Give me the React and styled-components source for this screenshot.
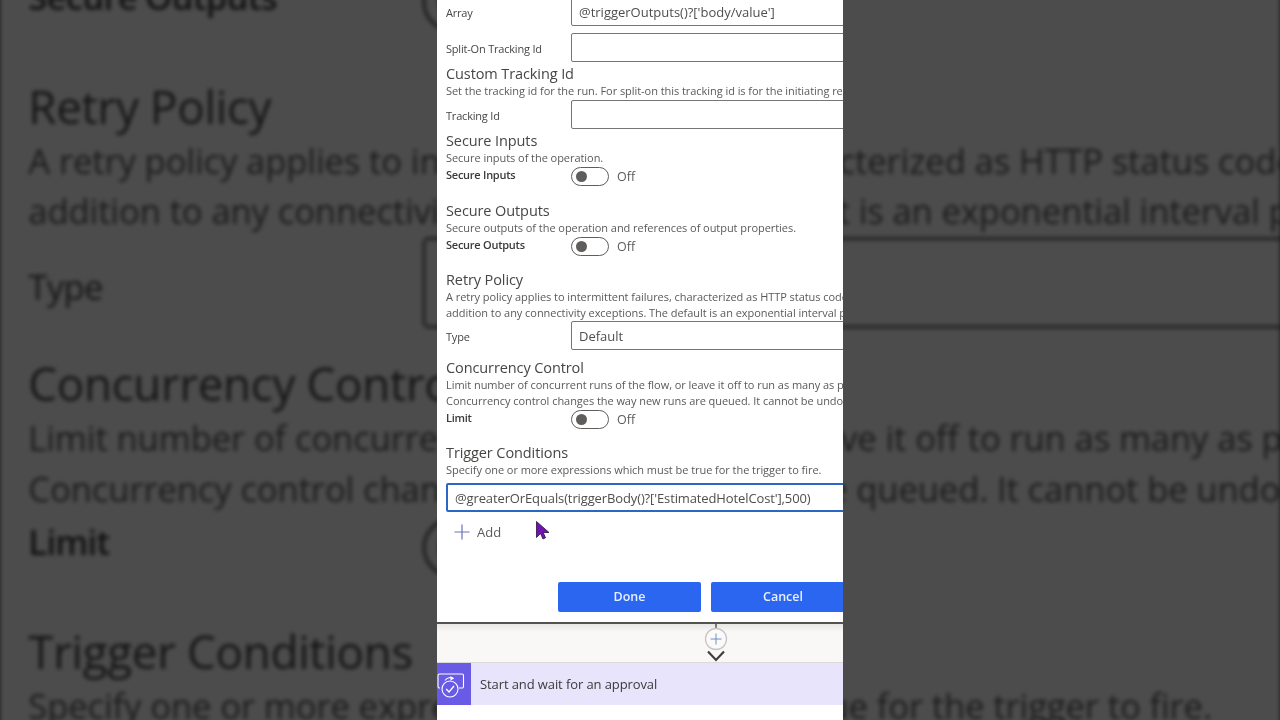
import React from 'react';
import styled, { createGlobalStyle } from 'styled-components';

const GlobalStyle = createGlobalStyle`
  html, body {
    margin: 0;
    padding: 0;
    background: #4d4d4d;
    font-family: "Open Sans", "Noto Sans", "Liberation Sans", sans-serif;
  }
`;

const Stage = styled.div`
  position: relative;
  width: 1280px;
  height: 720px;
  overflow: hidden;
  display: flex;
  justify-content: center;
`;

// the same frame, zoomed up and dimmed, fills the sides of the video
const Backdrop = styled.div`
  position: absolute;
  inset: 0;
  display: flex;
  justify-content: center;
  &::after {
    content: '';
    position: absolute;
    inset: 0;
    background: rgba(0, 0, 0, 0.7);
  }
`;

const Zoomed = styled.div`
  flex: none;
  transform: scale(3.153);
  transform-origin: center center;
  filter: blur(0.7px);
`;

const Foreground = styled.div`
  position: relative;
  flex: none;
  filter: blur(0.3px);
`;

const Sheet = styled.div`
  width: 406px;
  height: 720px;
  background: #fff;
  overflow: hidden;
  display: flex;
  flex-direction: column;
  color: #323130;
`;

const Form = styled.div`
  height: 625px;
  flex: none;
  padding-left: 9px;
  margin-top: -3px;
  display: flex;
  flex-direction: column;
`;

const FieldRow = styled.div`
  display: flex;
  align-items: flex-start;
  margin-top: ${(p) => p.$top || 0}px;
`;

const FieldLabel = styled.div`
  width: 125px;
  flex: none;
  font-size: 11px;
  line-height: 16px;
  padding-top: 8px;
  color: #484644;
  letter-spacing: -0.2px;
`;

const TextBox = styled.div`
  width: 300px;
  height: 29px;
  flex: none;
  box-sizing: border-box;
  border: 1px solid #77757a;
  border-radius: 2px;
  padding: 1px 7px 0;
  font-size: 13px;
  line-height: 26px;
  color: #504e4c;
  white-space: nowrap;
`;

const Heading = styled.div`
  font-size: 14.5px;
  line-height: 19px;
  height: 19px;
  margin-top: ${(p) => p.$top || 0}px;
  color: #484644;
  white-space: nowrap;
  letter-spacing: -0.1px;
`;

const Description = styled.div`
  font-size: 11px;
  line-height: 16px;
  height: 16px;
  color: #5c5a58;
  white-space: nowrap;
  letter-spacing: -0.05px;
`;

const ToggleRow = styled.div`
  display: flex;
  align-items: center;
  height: 19px;
  margin-top: 1px;
`;

const ToggleLabel = styled.div`
  width: 125px;
  flex: none;
  font-size: 11px;
  font-weight: 600;
  line-height: 16px;
  margin-top: -3px;
  color: #3b3a39;
  letter-spacing: -0.25px;
`;

const ToggleTrack = styled.div`
  width: 38px;
  height: 19px;
  flex: none;
  box-sizing: border-box;
  border: 1px solid #605e5c;
  border-radius: 10px;
  padding: 3px 4px;
`;

const ToggleThumb = styled.div`
  width: 11px;
  height: 11px;
  border-radius: 50%;
  background: #605e5c;
`;

const ToggleText = styled.div`
  margin-left: 8px;
  font-size: 12.5px;
  color: #5c5a58;
`;

const ConditionBox = styled.div`
  width: 420px;
  height: 29px;
  flex: none;
  margin-top: 5px;
  box-sizing: border-box;
  border: 2px solid #2c67c4;
  border-radius: 2px;
  padding: 0 7px;
  font-size: 13px;
  line-height: 26px;
  color: #504e4c;
  white-space: nowrap;
  letter-spacing: -0.12px;
`;

const AddRow = styled.div`
  display: flex;
  align-items: center;
  height: 30px;
  margin-top: 5px;
  padding-left: 8px;
  gap: 7px;
  font-size: 13px;
  color: #5c5a58;
`;

const Actions = styled.div`
  display: flex;
  gap: 10px;
  margin-top: 35px;
  padding-left: 112px;
`;

const ActionButton = styled.div`
  width: ${(p) => p.$width}px;
  height: 30px;
  flex: none;
  background: #2b66f0;
  border-radius: 2px;
  color: #e8f0ff;
  font-size: 12.5px;
  font-weight: 600;
  line-height: 30px;
  text-align: center;
`;

const Gutter = styled.div`
  height: 40px;
  flex: none;
  box-sizing: border-box;
  border-top: 2px solid #55534f;
  background: linear-gradient(#e8e7e5, #f9f8f7 8px, #f9f8f7);
  padding-left: 264px;
`;

const StepCard = styled.div`
  height: 43px;
  flex: none;
  display: flex;
  align-items: center;
  background: #e7e4fb;
  border-top: 1px solid #dcdad8;
  box-sizing: border-box;
`;

const StepIcon = styled.div`
  width: 34px;
  height: 100%;
  flex: none;
  background: #6a5be6;
`;

const StepTitle = styled.div`
  margin-left: 9px;
  font-size: 13px;
  color: #3b3a39;
  letter-spacing: -0.1px;
`;

const Cursor = styled.svg`
  position: absolute;
  left: 99px;
  top: 520px;
`;

const Toggle = ({ label }) => (
  <ToggleRow>
    <ToggleLabel>{label}</ToggleLabel>
    <ToggleTrack>
      <ToggleThumb />
    </ToggleTrack>
    <ToggleText>Off</ToggleText>
  </ToggleRow>
);

const PlusIcon = () => (
  <svg width="16" height="16" viewBox="0 0 16 16" fill="none" stroke="#6b74b8" strokeWidth="1.2">
    <path d="M8 0.5V15.5M0.5 8H15.5" />
  </svg>
);

const Connector = () => (
  <svg width="30" height="38" viewBox="0 0 30 38" fill="none" style={{ display: 'block' }}>
    <path d="M15 0V5" stroke="#55534f" strokeWidth="1.5" />
    <circle cx="15" cy="15" r="10.5" fill="#fbfaf9" stroke="#c8c6c4" strokeWidth="1.3" />
    <path d="M15 9.5V20.5M9.5 15H20.5" stroke="#6f8fc8" strokeWidth="1" />
    <path d="M7 27.5L15 36L23 27.5" stroke="#3f3e3c" strokeWidth="2.2" />
  </svg>
);

const ApprovalIcon = () => (
  <svg width="34" height="42" viewBox="0 0 34 42" fill="none" stroke="#fff" strokeWidth="1.1">
    <path d="M3 25H2.5A1.5 1.5 0 0 1 1 23.5V12.5A1.5 1.5 0 0 1 2.5 11H25A1.5 1.5 0 0 1 26.5 12.5V23.5A1.5 1.5 0 0 1 25 25H22" />
    <circle cx="13" cy="26" r="8" fill="#6a5be6" />
    <path d="M9.2 26L12 29L17 23" strokeWidth="1.3" />
    <path d="M8 17.5C10 14.5 14 14 16.5 15.5" />
    <path d="M13.5 13L17 15.5L13.5 17.5Z" fill="#fff" stroke="none" />
  </svg>
);

const Frame = () => (
  <Sheet>
    <Form>
      <FieldRow>
        <FieldLabel>Array</FieldLabel>
        <TextBox>@triggerOutputs()?['body/value']</TextBox>
      </FieldRow>
      <FieldRow $top={7}>
        <FieldLabel>Split-On Tracking Id</FieldLabel>
        <TextBox />
      </FieldRow>

      <Heading $top={2}>Custom Tracking Id</Heading>
      <Description>Set the tracking id for the run. For split-on this tracking id is for the initiating request.</Description>
      <FieldRow $top={1}>
        <FieldLabel>Tracking Id</FieldLabel>
        <TextBox />
      </FieldRow>

      <Heading $top={2}>Secure Inputs</Heading>
      <Description>Secure inputs of the operation.</Description>
      <Toggle label="Secure Inputs" />

      <Heading $top={15}>Secure Outputs</Heading>
      <Description>Secure outputs of the operation and references of output properties.</Description>
      <Toggle label="Secure Outputs" />

      <Heading $top={14}>Retry Policy</Heading>
      <Description>A retry policy applies to intermittent failures, characterized as HTTP status codes 408, 429, and 5xx, in</Description>
      <Description>addition to any connectivity exceptions. The default is an exponential interval policy set to retry 4 times.</Description>
      <FieldRow>
        <FieldLabel>Type</FieldLabel>
        <TextBox>Default</TextBox>
      </FieldRow>

      <Heading $top={8}>Concurrency Control</Heading>
      <Description>Limit number of concurrent runs of the flow, or leave it off to run as many as possible.</Description>
      <Description>Concurrency control changes the way new runs are queued. It cannot be undone once enabled.</Description>
      <Toggle label="Limit" />

      <Heading $top={14}>Trigger Conditions</Heading>
      <Description>Specify one or more expressions which must be true for the trigger to fire.</Description>
      <ConditionBox>@greaterOrEquals(triggerBody()?['EstimatedHotelCost'],500)</ConditionBox>
      <AddRow>
        <PlusIcon />
        <span>Add</span>
      </AddRow>

      <Actions>
        <ActionButton $width={143}>Done</ActionButton>
        <ActionButton $width={144}>Cancel</ActionButton>
      </Actions>
    </Form>

    <Gutter>
      <Connector />
    </Gutter>

    <StepCard>
      <StepIcon>
        <ApprovalIcon />
      </StepIcon>
      <StepTitle>Start and wait for an approval</StepTitle>
    </StepCard>
  </Sheet>
);

export default function App() {
  return (
    <>
      <GlobalStyle />
      <Stage>
        <Backdrop aria-hidden="true">
          <Zoomed>
            <Frame />
          </Zoomed>
        </Backdrop>
        <Foreground>
          <Frame />
          <Cursor width="16" height="20" viewBox="0 0 16 20">
            <path d="M0.5 1.5L0.5 17.5L4.5 13.5L7 19L9.5 17.8L7.2 12.5L13 12.5Z" fill="#6f14b0" stroke="#2a1040" strokeWidth="0.8" />
          </Cursor>
        </Foreground>
      </Stage>
    </>
  );
}
